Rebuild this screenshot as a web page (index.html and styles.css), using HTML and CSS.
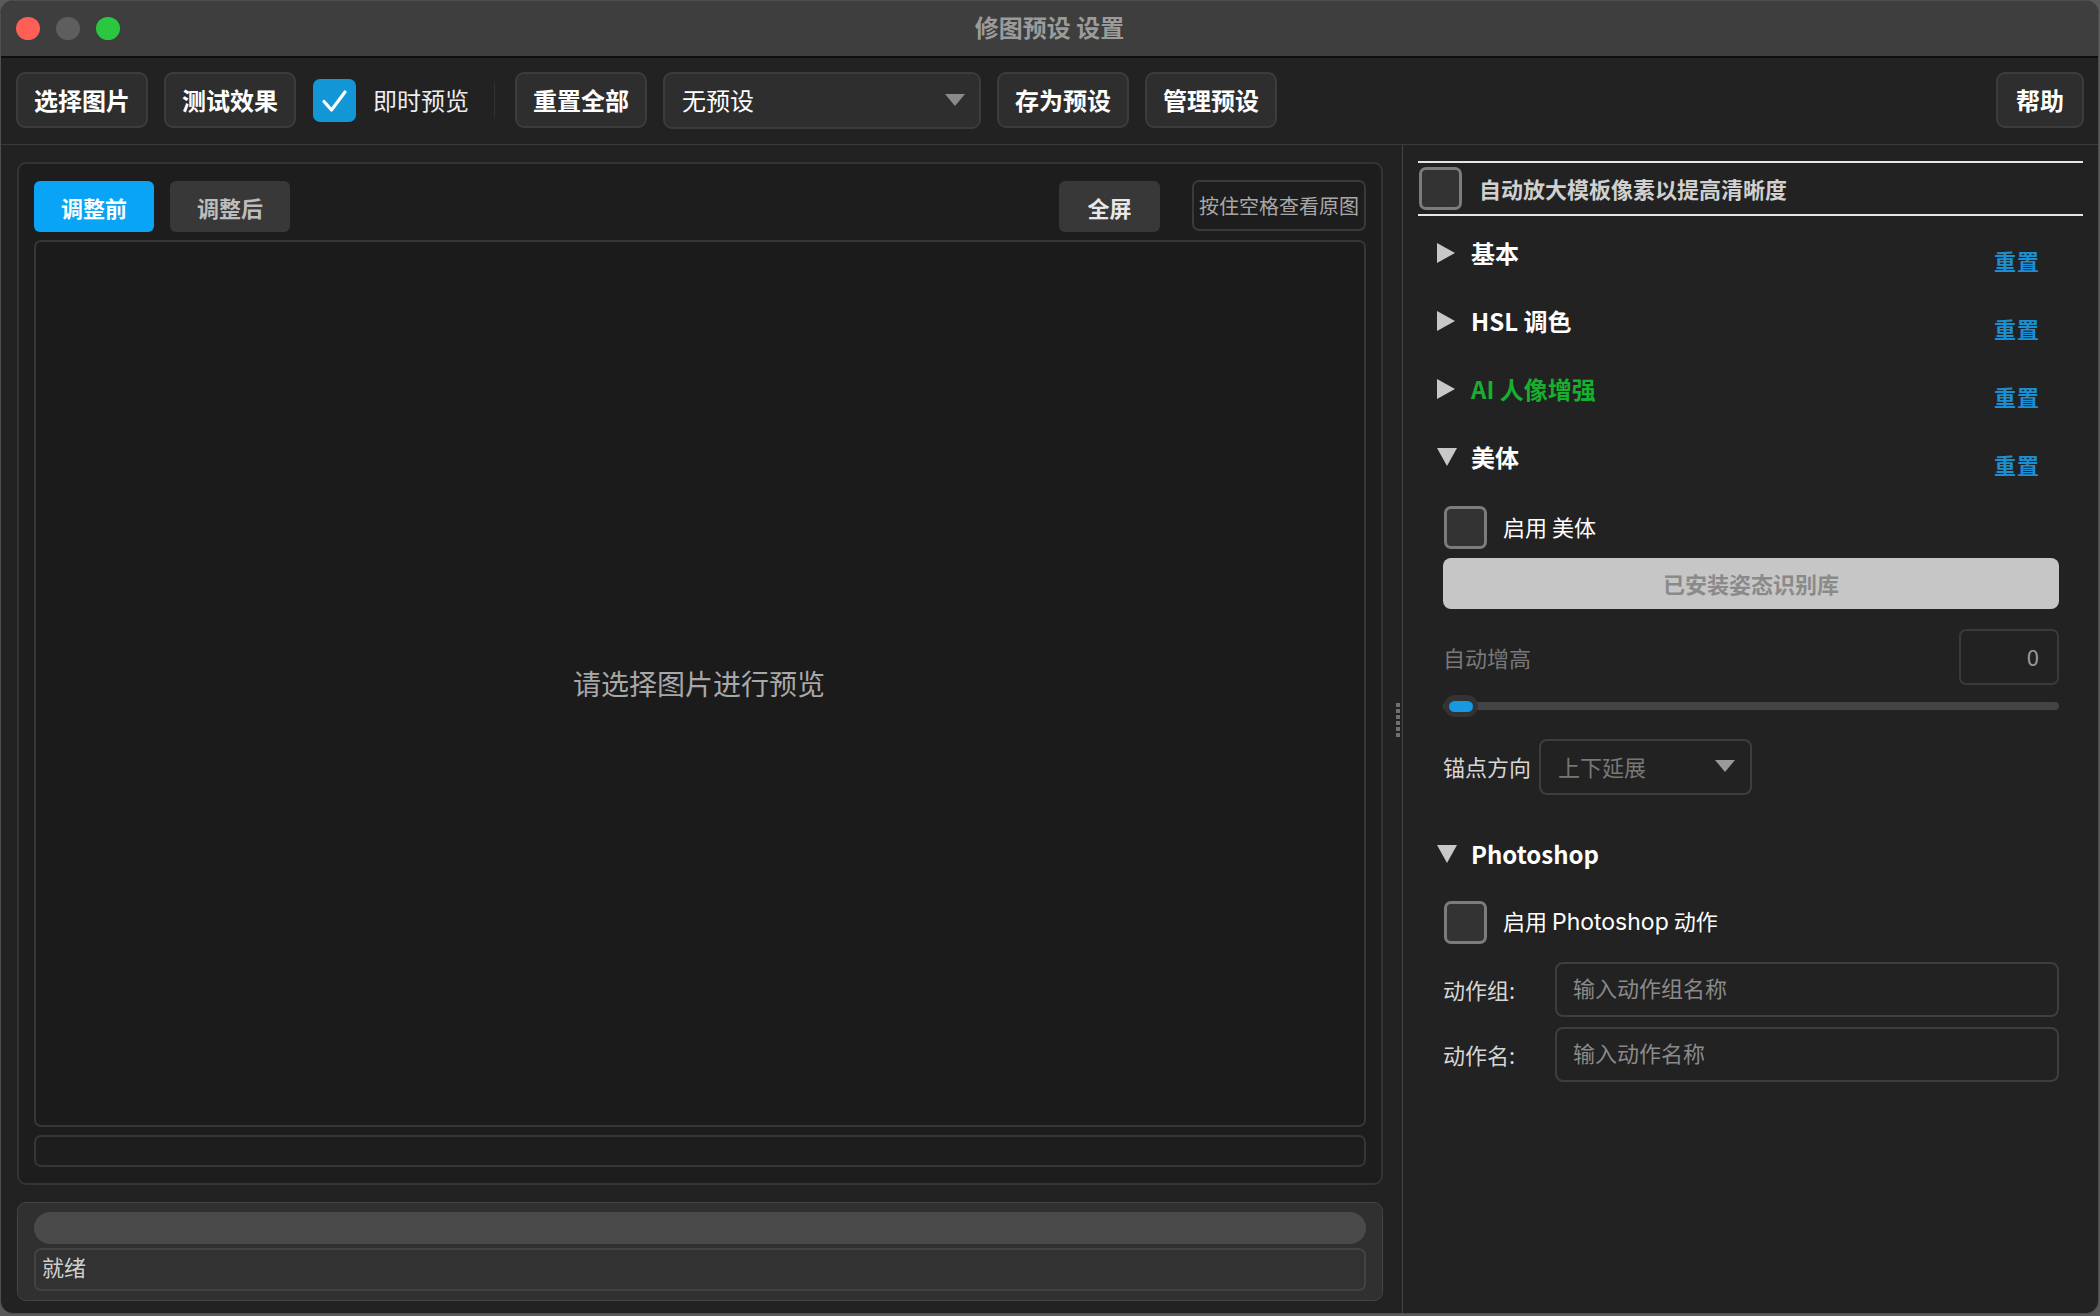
FILE: index.html
```html
<!DOCTYPE html>
<html lang="zh-CN">
<head>
<meta charset="utf-8">
<title>修图预设 设置</title>
<link rel="stylesheet" href="styles.css">
</head>
<body>
<div class="window">
  <header class="titlebar">
    <div class="lights">
      <span class="light red"></span>
      <span class="light gray"></span>
      <span class="light green"></span>
    </div>
    <div class="title">修图预设 设置</div>
    <div></div>
  </header>

  <div class="toolbar">
    <button class="btn">选择图片</button>
    <button class="btn">测试效果</button>
    <label class="tcheck">
      <span class="cbox checked"><svg viewBox="0 0 43 43" width="43" height="43"><path d="M11 22.5 L18.5 31 L32 13" fill="none" stroke="#fff" stroke-width="3.2" stroke-linecap="round" stroke-linejoin="round"/></svg></span>
      <span class="tcheck-text">即时预览</span>
    </label>
    <span class="vsep"></span>
    <button class="btn">重置全部</button>
    <div class="combo preset">
      <span>无预设</span>
      <svg class="arrow" viewBox="0 0 20 12" width="20" height="12"><polygon points="0,0 20,0 10,12" fill="#8a8a8a"/></svg>
    </div>
    <button class="btn">存为预设</button>
    <button class="btn">管理预设</button>
    <span class="spacer"></span>
    <button class="btn help">帮助</button>
  </div>

  <div class="main">
    <div class="left">
      <section class="panel preview-panel">
        <div class="tabrow">
          <button class="tab active">调整前</button>
          <button class="tab">调整后</button>
          <span class="spacer"></span>
          <button class="tab full">全屏</button>
          <button class="hint">按住空格查看原图</button>
        </div>
        <div class="preview"><span>请选择图片进行预览</span></div>
        <div class="infobar"></div>
      </section>
      <section class="panel status-panel">
        <div class="progress"></div>
        <div class="status">就绪</div>
      </section>
    </div>

    <div class="splitter">
      <div class="grip"><i></i><i></i><i></i><i></i><i></i><i></i></div>
    </div>

    <aside class="right">
      <div class="autorow">
        <span class="cbox"></span>
        <span class="autotext">自动放大模板像素以提高清晰度</span>
      </div>

      <div class="sec-head">
        <svg class="tri" viewBox="0 0 18 20" width="18" height="20"><polygon points="0,0 18,10 0,20" fill="#c8c8c8"/></svg>
        <span class="sec-title">基本</span>
        <span class="reset">重置</span>
      </div>
      <div class="sec-head">
        <svg class="tri" viewBox="0 0 18 20" width="18" height="20"><polygon points="0,0 18,10 0,20" fill="#c8c8c8"/></svg>
        <span class="sec-title">HSL 调色</span>
        <span class="reset">重置</span>
      </div>
      <div class="sec-head">
        <svg class="tri" viewBox="0 0 18 20" width="18" height="20"><polygon points="0,0 18,10 0,20" fill="#c8c8c8"/></svg>
        <span class="sec-title ai">AI 人像增强</span>
        <span class="reset">重置</span>
      </div>
      <div class="sec-head">
        <svg class="tri down" viewBox="0 0 20 18" width="20" height="18"><polygon points="0,0 20,0 10,18" fill="#c8c8c8"/></svg>
        <span class="sec-title">美体</span>
        <span class="reset">重置</span>
      </div>

      <div class="sec-body body-slim">
        <label class="crow">
          <span class="cbox"></span>
          <span class="ctext">启用 美体</span>
        </label>
        <button class="lib-btn">已安装姿态识别库</button>
        <div class="spinrow">
          <span class="dim-label">自动增高</span>
          <div class="spin">0</div>
        </div>
        <div class="slider">
          <div class="track"></div>
          <div class="handle"><span></span></div>
        </div>
        <div class="anchorrow">
          <span class="label">锚点方向</span>
          <div class="combo anchor">
            <span>上下延展</span>
            <svg class="arrow" viewBox="0 0 20 12" width="20" height="12"><polygon points="0,0 20,0 10,12" fill="#9a9a9a"/></svg>
          </div>
        </div>
      </div>

      <div class="sec-head ps-head">
        <svg class="tri down" viewBox="0 0 20 18" width="20" height="18"><polygon points="0,0 20,0 10,18" fill="#c8c8c8"/></svg>
        <span class="sec-title">Photoshop</span>
      </div>

      <div class="sec-body">
        <label class="crow ps-row">
          <span class="cbox"></span>
          <span class="ctext">启用 <span class="latin">Photoshop</span> 动作</span>
        </label>
        <div class="field">
          <span class="label fl">动作组:</span>
          <div class="input">输入动作组名称</div>
        </div>
        <div class="field">
          <span class="label fl">动作名:</span>
          <div class="input">输入动作名称</div>
        </div>
      </div>
    </aside>
  </div>
</div>
</body>
</html>
```

FILE: styles.css
```css
* { box-sizing: border-box; }

html, body {
  margin: 0;
  padding: 0;
  background: #5a5a5a;
  width: 2100px;
  height: 1316px;
  overflow: hidden;
  font-family: "Noto Sans CJK SC", "Noto Sans", sans-serif;
}

button {
  font-family: inherit;
  margin: 0;
}

.window {
  width: 2099px;
  height: 1314px;
  background: #222222;
  border: 1px solid #4e4e4e;
  border-radius: 13px;
  overflow: hidden;
  display: flex;
  flex-direction: column;
}

/* title bar */
.titlebar {
  height: 57px;
  flex: none;
  background: #3e3e3e;
  border-bottom: 2px solid #0e0e0e;
  display: grid;
  grid-template-columns: 1fr auto 1fr;
  align-items: center;
}
.lights {
  display: flex;
  gap: 16px;
  padding-left: 15px;
}
.light {
  width: 24px;
  height: 23px;
  border-radius: 50%;
}
.light.red { background: #fe5f57; }
.light.gray { background: #5e5e5e; }
.light.green { background: #29c840; }
.title {
  font-size: 24px;
  font-weight: 700;
  color: #9b9b9b;
  line-height: 30px;
  margin-bottom: 4px;
}

/* toolbar */
.toolbar {
  height: 87px;
  flex: none;
  border-bottom: 1px solid #3a3a3a;
  display: flex;
  align-items: center;
  padding: 0 14px 2px 15px;
  gap: 16px;
}
.btn {
  height: 56px;
  padding: 0 16px 1px;
  min-width: 131px;
  background: #2e2e2e;
  border: 2px solid #3c3c3c;
  border-radius: 9px;
  color: #ffffff;
  font-size: 24px;
  font-weight: 700;
  line-height: 30px;
}
.btn.help {
  min-width: 88px;
}
.tcheck {
  display: flex;
  align-items: center;
  gap: 17px;
  margin-left: 1px;
}
.cbox {
  display: block;
  flex: none;
  width: 43px;
  height: 43px;
  border-radius: 7px;
  border: 3px solid #7c7c7c;
  background: #333333;
}
.cbox.checked {
  border: none;
  background: #1296d6;
}
.cbox svg { display: block; }
.tcheck-text {
  color: #ededed;
  font-size: 24px;
  line-height: 30px;
  margin-bottom: 1px;
}
.vsep {
  width: 1px;
  height: 34px;
  background: #333333;
  margin: 0 4px 0 9px;
}
.combo {
  display: flex;
  align-items: center;
  justify-content: space-between;
  border-radius: 9px;
}
.combo.preset {
  width: 318px;
  height: 57px;
  background: #2e2e2e;
  border: 2px solid #3c3c3c;
  padding: 0 14px 0 17px;
  color: #ffffff;
  font-size: 24px;
  line-height: 30px;
}
.arrow { display: block; flex: none; }
.spacer { flex: 1; }

/* main */
.main {
  flex: 1;
  display: flex;
  min-height: 0;
}
.left {
  width: 1395px;
  flex: none;
  display: flex;
  flex-direction: column;
  gap: 17px;
  padding: 17px 13px 12px 16px;
}
.panel {
  border-radius: 9px;
}
.preview-panel {
  flex: 1;
  display: flex;
  flex-direction: column;
  background: #1d1d1d;
  border: 2px solid #343434;
  padding: 17px 15px 16px 15px;
}
.tabrow {
  height: 51px;
  flex: none;
  display: flex;
  align-items: center;
  gap: 16px;
  margin-bottom: 8px;
}
.tab {
  height: 51px;
  width: 120px;
  border: none;
  border-radius: 6px;
  background: #383838;
  color: #bdbdbd;
  font-size: 22px;
  font-weight: 700;
  line-height: 28px;
  padding-bottom: 1px;
}
.tab.active {
  background: #0aa4f6;
  color: #ffffff;
}
.tab.full {
  width: 101px;
  color: #e8e8e8;
  margin-right: 16px;
}
.hint {
  height: 51px;
  width: 174px;
  border: 2px solid #3a3a3a;
  border-radius: 7px;
  background: transparent;
  color: #a8a8a8;
  font-size: 20px;
  line-height: 26px;
  padding: 0;
  margin-top: -2px;
}
.preview {
  flex: 1;
  border: 2px solid #363636;
  border-radius: 7px;
  background: #1b1b1b;
  display: flex;
  align-items: center;
  justify-content: center;
}
.preview span {
  color: #a8a8a8;
  font-size: 28px;
  line-height: 36px;
  margin-right: 2px;
  margin-bottom: 2px;
}
.infobar {
  height: 32px;
  flex: none;
  margin-top: 8px;
  border: 2px solid #363636;
  border-radius: 7px;
}
.status-panel {
  height: 99px;
  flex: none;
  background: #303030;
  border: 1px solid #444444;
  padding: 9px 16px;
  display: flex;
  flex-direction: column;
  gap: 4px;
}
.progress {
  height: 32px;
  border-radius: 16px;
  background: #4a4a4a;
}
.status {
  height: 43px;
  border: 2px solid #424242;
  border-radius: 7px;
  background: #323232;
  color: #cfcfcf;
  font-size: 22px;
  line-height: 33px;
  padding-left: 6px;
}

/* splitter */
.splitter {
  width: 7px;
  flex: none;
  border-right: 1px solid #454545;
  display: flex;
  align-items: center;
  padding-bottom: 18px;
}
.grip {
  display: flex;
  flex-direction: column;
  gap: 2px;
}
.grip i {
  display: block;
  width: 4px;
  height: 4px;
  background: #707070;
}

/* right panel */
.right {
  flex: 1;
  padding: 16px 15px 0 15px;
  display: flex;
  flex-direction: column;
}
.autorow {
  height: 55px;
  border-top: 2px solid #e6e6e6;
  border-bottom: 2px solid #e6e6e6;
  display: flex;
  align-items: center;
  gap: 17px;
  padding-left: 1px;
}
.autotext {
  color: #d0d0d0;
  font-size: 22px;
  font-weight: 700;
  line-height: 28px;
  margin-bottom: 2px;
}
.sec-head {
  height: 68px;
  flex: none;
  display: flex;
  align-items: center;
  padding-left: 19px;
  padding-right: 43px;
}
.autorow + .sec-head { margin-top: 4px; }
.tri {
  display: block;
  flex: none;
  margin-right: 16px;
  margin-bottom: 3px;
}
.tri.down {
  margin-right: 14px;
}
.sec-title {
  flex: 1;
  color: #ffffff;
  font-size: 24px;
  font-weight: 700;
  line-height: 30px;
  margin-bottom: 2px;
}
.sec-title.ai { color: #16b02e; }
.reset {
  color: #1a8fd2;
  font-size: 22px;
  font-weight: 700;
  line-height: 28px;
  margin-top: 11px;
  letter-spacing: 1px;
}
.sec-body {
  padding: 0 24px 0 25px;
  display: flex;
  flex-direction: column;
}
.crow {
  display: flex;
  align-items: center;
  gap: 16px;
  margin-top: 14px;
  padding-left: 1px;
}
.ctext {
  color: #ffffff;
  font-size: 22px;
  line-height: 28px;
  margin-bottom: 3px;
}
.latin {
  font-family: "Inter", "Noto Sans", sans-serif;
  font-size: 23px;
}
.lib-btn {
  height: 51px;
  margin-top: 9px;
  border: none;
  border-radius: 8px;
  background: #c6c6c6;
  color: #8a8a8a;
  font-size: 22px;
  font-weight: 700;
  line-height: 28px;
  padding-bottom: 2px;
}
.spinrow {
  display: flex;
  align-items: center;
  justify-content: space-between;
  margin-top: 20px;
}
.dim-label {
  color: #787878;
  font-size: 22px;
  line-height: 28px;
}
.spin {
  width: 100px;
  height: 56px;
  border: 2px solid #3a3a3a;
  border-radius: 7px;
  color: #9a9a9a;
  font-size: 22px;
  line-height: 50px;
  text-align: right;
  padding-right: 18px;
}
.slider {
  position: relative;
  height: 22px;
  margin-top: 10px;
  display: flex;
  align-items: center;
}
.track {
  flex: 1;
  height: 8px;
  border-radius: 4px;
  background: #444444;
}
.handle {
  position: absolute;
  left: 1px;
  top: 0;
  width: 34px;
  height: 22px;
  border-radius: 11px;
  background: #333333;
  display: flex;
  align-items: center;
  justify-content: center;
}
.handle span {
  width: 24px;
  height: 11px;
  border-radius: 6px;
  background: #1699e0;
}
.anchorrow {
  display: flex;
  align-items: center;
  margin-top: 22px;
}
.label {
  color: #d6d6d6;
  font-size: 22px;
  line-height: 28px;
  margin-bottom: 2px;
}
.combo.anchor {
  width: 213px;
  height: 56px;
  margin-left: 8px;
  border: 2px solid #3e3e3e;
  border-radius: 8px;
  padding: 0 15px 2px 17px;
  color: #777777;
  font-size: 22px;
  line-height: 28px;
}
.ps-head {
  margin-top: 26px;
}
.ps-row {
  margin-top: 12px;
}
.field {
  display: flex;
  align-items: center;
  margin-top: 10px;
}
.ps-row + .field { margin-top: 18px; }
.fl {
  width: 112px;
  flex: none;
}
.input {
  flex: 1;
  height: 55px;
  border: 2px solid #3e3e3e;
  border-radius: 8px;
  color: #8a8a8a;
  font-size: 22px;
  line-height: 47px;
  padding-left: 16px;
}
```
